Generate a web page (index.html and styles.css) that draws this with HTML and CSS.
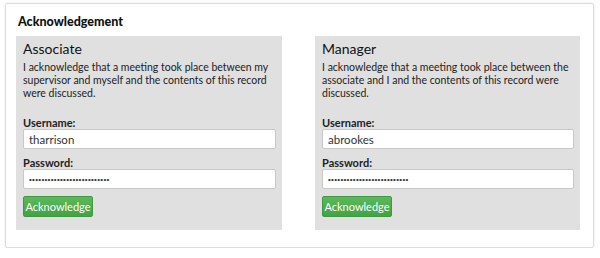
FILE: index.html
```html
<!DOCTYPE html>
<html lang="en">
<head>
  <meta charset="UTF-8" />
  <title>Acknowledgement</title>
  <link rel="stylesheet" href="styles.css">
</head>
<body>
  <div class="ack-card">
    <h2 class="ack-title">Acknowledgement</h2>

    <div class="ack-grid">
      <div class="ack-panel">
        <h3>Associate</h3>
        <p>I acknowledge that a meeting took place between my supervisor and myself and the contents of this record were discussed.</p>
        <label for="assoc_user">Username:</label>
        <input type="text" id="assoc_user" value="tharrison" />
        <label for="assoc_pass">Password:</label>
        <input type="password" class="pass" id="assoc_pass" value="abcdefghijklmnopqrstuvwxyz" />
        <button class="btn-ack">Acknowledge</button>
      </div>

      <div class="ack-panel">
        <h3>Manager</h3>
        <p>I acknowledge that a meeting took place between the associate and I and the contents of this record were discussed.</p>
        <label for="mgr_user">Username:</label>
        <input type="text" id="mgr_user" value="abrookes" />
        <label for="mgr_pass">Password:</label>
        <input type="password" class="pass" id="mgr_pass" value="abcdefghijklmnopqrstuvwxyz" />
        <button class="btn-ack">Acknowledge</button>
      </div>
    </div>
  </div>
</body>
</html>
```

FILE: styles.css
```css
body {
  margin: 0;
  background: #fff;
  font-family: Lato, "Liberation Sans", sans-serif;
  color: #222;
}

.ack-card {
  margin: 3px 6px 0 5px;
  height: 245px;
  box-sizing: border-box;
  padding: 0 12px 0 10px;
  border: 1px solid #ddd;
  border-radius: 2px;
  box-shadow: 0 0 3px #e6e6e6;
}

.ack-title {
  margin: 0;
  padding: 10px 0 0 2px;
  height: 22px;
  font-size: 12.5px;
  font-weight: 900;
  color: #111;
}

.ack-grid {
  display: grid;
  grid-template-columns: 266px 265px;
  column-gap: 33px;
}

.ack-panel {
  background: #e0e0e0;
  padding: 5px 6px 13px 7px;
  display: flex;
  flex-direction: column;
  align-items: flex-start;
}

.ack-panel h3 {
  margin: 0;
  font-size: 14px;
  font-weight: 400;
  line-height: 15px;
  color: #111;
}

.ack-panel p {
  margin: 5px 0 16px;
  font-size: 10.5px;
  line-height: 13px;
}

.ack-panel label {
  font-size: 11px;
  line-height: 13px;
  font-weight: 700;
  color: #222;
}

.ack-panel input {
  width: 100%;
  height: 20px;
  box-sizing: border-box;
  margin: 0 0 7px;
  padding: 0 5px;
  border: 1px solid #c8c8c8;
  border-radius: 2px;
  background: #fff;
  font-family: inherit;
  font-size: 11.5px;
  color: #333;
}

.ack-panel input.pass {
  font-family: "Liberation Sans", sans-serif;
  font-size: 8px;
  letter-spacing: 0.3px;
}

.btn-ack {
  width: 70px;
  height: 21px;
  padding: 0;
  border: 1px solid #3d9a3d;
  border-radius: 2px;
  background: linear-gradient(#5cb85c, #43a243);
  color: #fff;
  font-family: inherit;
  font-size: 11px;
  cursor: pointer;
}
```
